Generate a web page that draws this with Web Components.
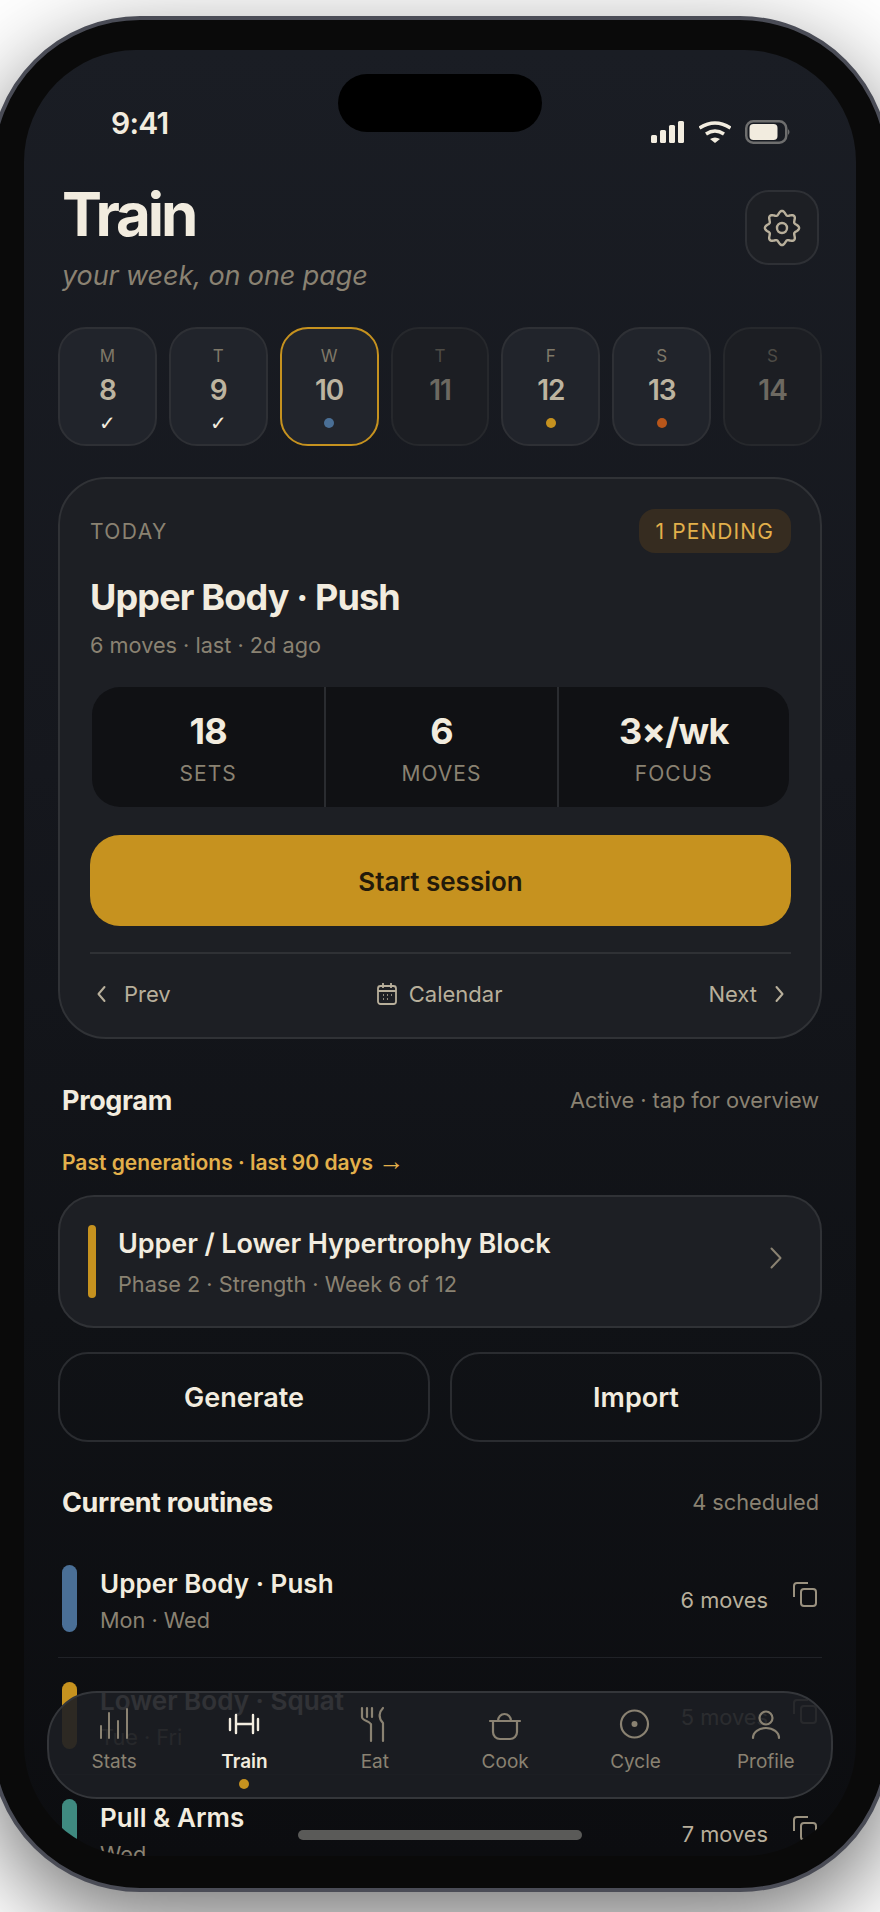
<!DOCTYPE html>
<html lang="en">
<head>
<meta charset="utf-8">
<title>Train</title>
<style>
    html, body { margin: 0; height: 1912px; overflow: hidden; background: #fff; }
    body { font-family: Inter, "Liberation Sans", sans-serif; color: #f2ecdf; }
</style>
</head>
<body>

<phone-frame>
    <status-bar></status-bar>
    <page-header></page-header>

    <week-strip>
        <day-chip letter="M" num="8" mark="check"></day-chip>
        <day-chip letter="T" num="9" mark="check"></day-chip>
        <day-chip letter="W" num="10" dot="#4a6f96" active></day-chip>
        <day-chip letter="T" num="11" dim></day-chip>
        <day-chip letter="F" num="12" dot="#c6921f"></day-chip>
        <day-chip letter="S" num="13" dot="#b8561a"></day-chip>
        <day-chip letter="S" num="14" dim></day-chip>
    </week-strip>

    <today-card>
        <stat-cell value="18" label="SETS"></stat-cell>
        <stat-cell value="6" label="MOVES"></stat-cell>
        <stat-cell value="3×/wk" label="FOCUS"></stat-cell>
    </today-card>

    <section-head note="Active · tap for overview" style="margin-top:44px">Program</section-head>
    <past-link>Past generations · last 90 days <span style="font-family:'Liberation Sans',sans-serif;font-weight:400;font-size:26px;line-height:0">→</span></past-link>
    <program-card sub="Phase 2 · Strength · Week 6 of 12">Upper / Lower Hypertrophy Block</program-card>

    <action-row>
        <action-button>Generate</action-button>
        <action-button>Import</action-button>
    </action-row>

    <section-head note="4 scheduled" style="margin-top:43px">Current routines</section-head>
    <routine-list>
        <routine-row color="#4a6f96" days="Mon · Wed" moves="6 moves">Upper Body · Push</routine-row>
        <routine-row color="#c6921f" days="Tue · Fri" moves="5 moves">Lower Body · Squat</routine-row>
        <routine-row color="#3f8a80" days="Wed" moves="7 moves">Pull &amp; Arms</routine-row>
    </routine-list>

    <tab-bar slot="overlay">
        <tab-item icon="stats">Stats</tab-item>
        <tab-item icon="train" active>Train</tab-item>
        <tab-item icon="eat">Eat</tab-item>
        <tab-item icon="cook">Cook</tab-item>
        <tab-item icon="cycle">Cycle</tab-item>
        <tab-item icon="profile">Profile</tab-item>
    </tab-bar>
    <home-indicator slot="overlay"></home-indicator>
</phone-frame>

<script>
    (function (customElements) {
        'use strict';

        // every element renders once, when it lands in the page
        class Base extends HTMLElement {
            connectedCallback() {
                if (this.shadowRoot) return;
                this.attachShadow({ mode: 'open' }).innerHTML = this.render();
            }
            attr(name) {
                return this.getAttribute(name) || '';
            }
        }

        const chevron = (dir) => `<svg width="24" height="24" viewBox="0 0 24 24" fill="none" stroke="currentColor" stroke-width="2" stroke-linecap="round" stroke-linejoin="round"><path d="${dir === 'left' ? 'M14.500 5 8.500 12l6 7' : 'M9.500 5l6 7-6 7'}"/></svg>`;

        // 8 lobes, the cog in the reference is rounder than the usual 6 tooth one
        function gearPath() {
            const pts = [];
            for (let i = 0; i < 160; i++) {
                const t = i / 160 * Math.PI * 2;
                const r = 15.2 + 1.9 * Math.cos(8 * t);
                pts.push((20 + r * Math.sin(t)).toFixed(2) + ' ' + (20 - r * Math.cos(t)).toFixed(2));
            }
            return 'M' + pts.join('L') + 'Z';
        }

        const TAB_ICONS = {
            stats: '<path d="M7 21v12M15 8v25M24 16v17M33 4v29" stroke-width="2"/>',
            train: '<path d="M6 14v11M34 14v11M12 10v18M29 10v18M12 19h17" stroke-width="2.4"/>',
            eat: '<path d="M7 3v9c0 4 9 4 9 8M12 3v9M17 3v9M16 19v17M28 3c-4 4-5 10 0 15v18" stroke-width="2.2"/>',
            cook: '<path d="M5 16h30M13 16a6.500 7 0 0 1 13 0M8 16v11a7 7 0 0 0 7 7h10a7 7 0 0 0 7-7V16" stroke-width="2.2"/>',
            cycle: '<circle cx="19.500" cy="19" r="13.500" stroke-width="2.2"/><circle cx="19.500" cy="19" r="3" fill="currentColor" stroke="none"/>',
            profile: '<circle cx="20" cy="13" r="6.500" stroke-width="2.2"/><path d="M7 33a13 10 0 0 1 26 0" stroke-width="2.2"/>'
        };

        class PhoneFrame extends Base {
            render() {
                return `<style>
                    :host { display: block; box-sizing: border-box; width: 900px; height: 1876px; margin: 16px 0 0 -10px;
                        padding: 30px 30px 30px 30px; border: 4px solid #4a4c56; border-radius: 150px; background: #0a0a0a;
                        box-shadow: 0 30px 90px rgba(0,0,0,.55); }
                    .screen { position: relative; width: 832px; height: 1806px; border-radius: 112px; overflow: hidden;
                        background: linear-gradient(180deg, #1a1d24 0%, #15171d 40%, #101216 70%, #0c0d10 100%); }
                    .island { position: absolute; left: 314px; top: 24px; width: 204px; height: 58px; border-radius: 29px; background: #000; }
                    .content { padding: 0 34px 0 34px; }
                </style>
                <div class="screen">
                    <div class="content"><slot></slot></div>
                    <div class="island"></div>
                    <slot name="overlay"></slot>
                </div>`;
            }
        }

        class StatusBar extends Base {
            render() {
                return `<style>
                    :host { display: flex; justify-content: space-between; box-sizing: border-box; height: 140px; margin: 0 -1px 0 -34px; padding-left: 87px; }
                    .time { margin-top: 54px; font-size: 30px; line-height: 38px; font-weight: 600; letter-spacing: -.8px; }
                    .icons { display: flex; gap: 14px; height: 24px; margin-top: 70px; padding-right: 32px; }
                </style>
                <div class="time">9:41</div>
                <div class="icons">
                    <svg width="36" height="24" viewBox="0 0 36 24" fill="#f2ecdf">
                        <rect x="0" y="15" width="6" height="8" rx="1.500"/><rect x="9" y="10" width="6" height="13" rx="1.500"/>
                        <rect x="18" y="5" width="6" height="18" rx="1.500"/><rect x="27" y="1" width="6" height="22" rx="1.500"/>
                    </svg>
                    <svg width="32" height="24" viewBox="0 0 32 24" fill="none" stroke="#f2ecdf" style="margin-left:-2px">
                        <path d="M.5 8Q16-2 31.500 8" stroke-width="3.500"/><path d="M7 14q9-6 18 0" stroke-width="3.500"/>
                        <path d="M11 19q5-3 10 0l-5 4z" fill="#f2ecdf" stroke="none"/>
                    </svg>
                    <svg width="46" height="24" viewBox="0 0 46 24">
                        <rect x="1.250" y="1.250" width="40" height="21.500" rx="7" fill="none" stroke="#6e6e6e" stroke-width="2.500"/>
                        <rect x="4.500" y="4" width="28" height="16" rx="4" fill="#f2ecdf"/>
                        <path d="M43 9q3 3 0 6z" fill="#6e6e6e"/>
                    </svg>
                </div>`;
            }
        }

        class PageHeader extends Base {
            render() {
                return `<style>
                    :host { display: flex; justify-content: space-between; height: 75px; padding: 0 3px 0 4px; }
                    h1 { margin: -6px 0 0; font-size: 60px; line-height: 60px; font-weight: 700; letter-spacing: -3.1px; }
                    p { margin: 14px 0 0; font-size: 27px; line-height: 36px; font-style: italic; font-weight: 400; letter-spacing: -.1px; color: #8a8272; }
                    .gear { box-sizing: border-box; width: 74px; height: 75px; display: flex; align-items: center; justify-content: center;
                        border: 2px solid #2e3035; border-radius: 24px; background: #1d1f24; color: #b8af9b; }
                </style>
                <div><h1>Train</h1><p>your week, on one page</p></div>
                <div class="gear">
                    <svg width="40" height="40" viewBox="0 0 40 40" fill="none" stroke="currentColor" stroke-width="2.400">
                        <path d="${gearPath()}"/><circle cx="20" cy="20" r="5"/>
                    </svg>
                </div>`;
            }
        }

        class WeekStrip extends Base {
            render() {
                return `<style>
                    :host { display: grid; grid-template-columns: repeat(7, 1fr); gap: 12px; height: 119px; margin-top: 62px; }
                </style><slot></slot>`;
            }
        }

        class DayChip extends Base {
            render() {
                const mark = this.attr('mark') === 'check'
                    ? '<span class="check">✓</span>'
                    : (this.attr('dot') ? `<span class="dot" style="background:${this.attr('dot')}"></span>` : '');
                return `<style>
                    :host { display: flex; flex-direction: column; align-items: center; box-sizing: border-box; height: 119px; padding-top: 15px;
                        border: 2px solid #2e3035; border-radius: 28px; background: #21242b; }
                    :host([dim]) { background: #1c1e23; border-color: #26282c; }
                    :host([dim]) .l, :host([dim]) .n { opacity: .5; }
                    :host([active]) { border-color: #c6921f; background: #22252c; }
                    .l { font-size: 17px; line-height: 24px; color: #7f7868; }
                    .n { margin-top: 5px; font-size: 28px; line-height: 34px; font-weight: 600; color: #bdb4a0; letter-spacing: -1px; }
                    .m { display: flex; align-items: center; justify-content: center; height: 24px; margin-top: 4px; }
                    .dot { width: 10px; height: 10px; border-radius: 50%; }
                    .check { font-family: "DejaVu Sans", sans-serif; font-size: 20px; color: #f2ecdf; font-weight: 700; }
                </style>
                <div class="l">${this.attr('letter')}</div>
                <div class="n">${this.attr('num')}</div>
                <div class="m">${mark}</div>`;
            }
        }

        class StatCell extends Base {
            render() {
                return `<style>
                    :host { display: flex; flex-direction: column; align-items: center; padding-top: 22px; border-left: 2px solid #2a2c30; }
                    :host(:first-child) { border-left: 0; }
                    .v { font-size: 36px; line-height: 44px; font-weight: 700; letter-spacing: -.7px; }
                    .k { margin-top: 7px; font-size: 21px; line-height: 28px; letter-spacing: 1px; color: #8a8272; }
                </style>
                <div class="v">${this.attr('value')}</div>
                <div class="k">${this.attr('label')}</div>`;
            }
        }

        class TodayCard extends Base {
            render() {
                return `<style>
                    :host { display: block; box-sizing: border-box; height: 562px; margin-top: 31px; padding: 30px 29px 0 30px;
                        border: 2px solid #303236; border-radius: 48px; background: #1d1f24; }
                    .top { display: flex; justify-content: space-between; align-items: center; height: 44px; }
                    .kicker { font-size: 21px; letter-spacing: 1.4px; color: #8a8272; }
                    .badge { display: flex; align-items: center; height: 44px; padding: 0 17px; border-radius: 16px; background: #362c20;
                        font-size: 21px; letter-spacing: 1.1px; color: #e3b04b; }
                    h2 { margin: 22px 0 0; font-size: 36px; line-height: 44px; font-weight: 700; letter-spacing: -.85px; }
                    .sub { margin-top: 11px; font-size: 21.7px; line-height: 30px; color: #8a8272; }
                    .stats { display: grid; grid-template-columns: repeat(3, 1fr); height: 120px; margin: 27px 2px 0; border-radius: 28px; background: #101114; }
                    .start { display: flex; align-items: center; justify-content: center; box-sizing: border-box; height: 91px; margin-top: 28px; padding-top: 2px; border-radius: 30px;
                        background: #c6921f; color: #231a0a; font-size: 26px; font-weight: 600; }
                    hr { height: 2px; margin: 26px 0 0; border: 0; background: #2f3135; }
                    .foot { display: flex; justify-content: space-between; align-items: center; height: 40px; margin-top: 20px; font-size: 22px; color: #b8af9b; }
                    .foot span { display: flex; align-items: center; gap: 10px; }
                    .foot span.cal { gap: 12px; }
                </style>
                <div class="top"><div class="kicker">TODAY</div><div class="badge">1 PENDING</div></div>
                <h2>Upper Body · Push</h2>
                <div class="sub">6 moves · last · 2d ago</div>
                <div class="stats"><slot></slot></div>
                <div class="start">Start session</div>
                <hr>
                <div class="foot">
                    <span>${chevron('left')}Prev</span>
                    <span class="cal">
                        <svg width="20" height="22" viewBox="0 0 20 22" fill="none" stroke="currentColor" stroke-width="1.800">
                            <rect x="1" y="3" width="18" height="18" rx="2.500"/><path d="M1 8h18M6 0v5M14 0v5"/>
                            <path d="M6 12h1M10 12h1M14 12h1M6 16h1M10 16h1" stroke-width="1.600"/>
                        </svg>Calendar</span>
                    <span>Next${chevron('right')}</span>
                </div>`;
            }
        }

        class SectionHead extends Base {
            render() {
                return `<style>
                    :host { display: flex; justify-content: space-between; align-items: center; height: 34px; padding: 0 3px 0 4px; }
                    .t { font-size: 27px; font-weight: 700; letter-spacing: -.35px; }
                    .n { font-size: 21.8px; letter-spacing: -.05px; color: #8a8272; }
                </style>
                <div class="t"><slot></slot></div><div class="n">${this.attr('note')}</div>`;
            }
        }

        class PastLink extends Base {
            render() {
                return `<style>
                    :host { display: block; height: 30px; margin-top: 31px; padding-left: 4px; font-size: 21px; line-height: 30px; font-weight: 600; color: #e3b04b; }
                </style><slot></slot>`;
            }
        }

        class ProgramCard extends Base {
            render() {
                return `<style>
                    :host { display: flex; align-items: center; box-sizing: border-box; height: 133px; margin-top: 17px; padding: 0 38px 0 28px;
                        border: 2px solid #303236; border-radius: 36px; background: #1d1f24; }
                    .bar { flex: none; width: 8px; height: 73px; border-radius: 4px; background: #c6921f; }
                    .txt { margin: 2px 0 0 22px; }
                    .t { font-size: 27px; line-height: 36px; font-weight: 600; letter-spacing: -.1px; }
                    .s { margin-top: 7px; font-size: 21.7px; line-height: 30px; color: #8a8272; }
                    svg { margin: 0 0 8px auto; color: #8a8272; }
                </style>
                <div class="bar"></div>
                <div class="txt"><div class="t"><slot></slot></div><div class="s">${this.attr('sub')}</div></div>
                <svg width="12" height="22" viewBox="0 0 12 22" fill="none" stroke="currentColor" stroke-width="2" stroke-linecap="round" stroke-linejoin="round"><path d="M1.500 1.500l9 9.500-9 9.500"/></svg>`;
            }
        }

        class ActionRow extends Base {
            render() {
                return `<style>
                    :host { display: grid; grid-template-columns: 1fr 1fr; gap: 20px; margin-top: 24px; }
                </style><slot></slot>`;
            }
        }

        class ActionButton extends Base {
            render() {
                return `<style>
                    :host { display: flex; align-items: center; justify-content: center; box-sizing: border-box; height: 90px;
                        border: 2px solid #2a2c30; border-radius: 30px; font-size: 27px; font-weight: 600; }
                </style><slot></slot>`;
            }
        }

        class RoutineList extends Base {
            render() {
                return `<style>:host { display: block; margin-top: 22px; }</style><slot></slot>`;
            }
        }

        class RoutineRow extends Base {
            render() {
                return `<style>
                    :host { display: flex; align-items: center; height: 67px; padding: 24px 4px 25px; border-bottom: 1px solid #202227; }
                    .bar { flex: none; width: 15px; height: 67px; border-radius: 8px; background: ${this.attr('color')}; }
                    .txt { margin: 4px 0 0 23px; }
                    .t { font-size: 26px; line-height: 34px; font-weight: 600; letter-spacing: .05px; }
                    .d { margin-top: 4px; font-size: 21.7px; line-height: 30px; color: #8a8272; }
                    .m { margin: 2px 0 0 auto; font-size: 21.8px; color: #b8af9b; }
                    svg { margin: 0 0 7px 24px; color: #9a917f; }
                </style>
                <div class="bar"></div>
                <div class="txt"><div class="t"><slot></slot></div><div class="d">${this.attr('days')}</div></div>
                <div class="m">${this.attr('moves')}</div>
                <svg width="26" height="26" viewBox="0 0 26 26" fill="none" stroke="currentColor" stroke-width="2">
                    <rect x="9" y="7" width="15" height="17" rx="3"/><path d="M2 15V4a3 3 0 0 1 3-3h11"/>
                </svg>`;
            }
        }

        class TabBar extends Base {
            render() {
                return `<style>
                    :host { position: absolute; left: 23px; top: 1641px; display: grid; grid-template-columns: repeat(6, 1fr); box-sizing: border-box;
                        width: 786px; height: 108px; border: 2px solid #34363a; border-radius: 50px; background: rgba(28,30,36,.9); }
                </style><slot></slot>`;
            }
        }

        class TabItem extends Base {
            render() {
                return `<style>
                    :host { display: flex; flex-direction: column; align-items: center; padding-top: 12px; color: #8a8272; }
                    :host([active]) { color: #f2ecdf; }
                    .l { margin-top: 4px; font-size: 19px; line-height: 26px; }
                    :host([active]) .l { font-weight: 600; }
                    .dot { width: 10px; height: 10px; margin-top: 4px; border-radius: 50%; }
                    :host([active]) .dot { background: #c6921f; }
                    svg { display: block; }
                </style>
                <svg width="40" height="40" viewBox="0 0 40 40" fill="none" stroke="currentColor" stroke-linecap="round" stroke-linejoin="round">${TAB_ICONS[this.attr('icon')]}</svg>
                <div class="l"><slot></slot></div>
                <div class="dot"></div>`;
            }
        }

        class HomeIndicator extends Base {
            render() {
                return `<style>
                    :host { position: absolute; left: 274px; top: 1780px; width: 284px; height: 10px; border-radius: 5px; background: #5a5a58; }
                </style>`;
            }
        }

        customElements.define('phone-frame', PhoneFrame);
        customElements.define('status-bar', StatusBar);
        customElements.define('page-header', PageHeader);
        customElements.define('week-strip', WeekStrip);
        customElements.define('day-chip', DayChip);
        customElements.define('stat-cell', StatCell);
        customElements.define('today-card', TodayCard);
        customElements.define('section-head', SectionHead);
        customElements.define('past-link', PastLink);
        customElements.define('program-card', ProgramCard);
        customElements.define('action-row', ActionRow);
        customElements.define('action-button', ActionButton);
        customElements.define('routine-list', RoutineList);
        customElements.define('routine-row', RoutineRow);
        customElements.define('tab-bar', TabBar);
        customElements.define('tab-item', TabItem);
        customElements.define('home-indicator', HomeIndicator);
    })(window.customElements);
</script>
</body>
</html>
